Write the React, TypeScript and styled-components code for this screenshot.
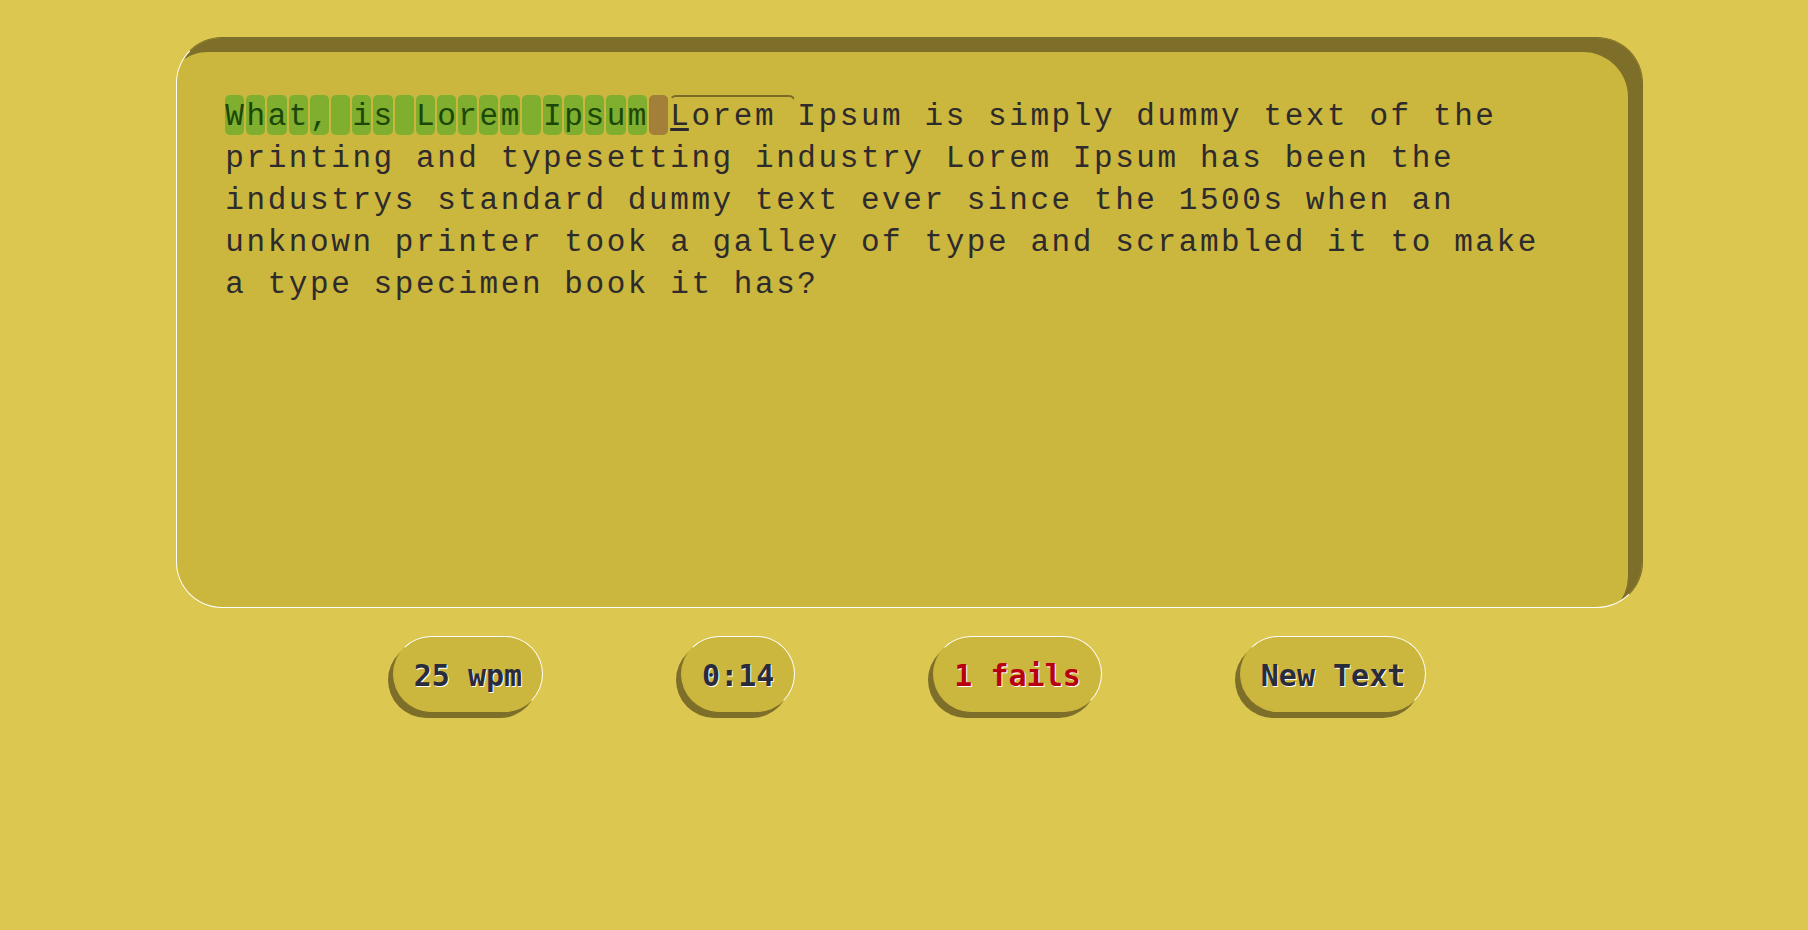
import React from "react";
import styled, { createGlobalStyle, css } from "styled-components";

const GlobalStyle = createGlobalStyle`
  html, body {
    margin: 0;
    padding: 0;
    background: #dcc751;
  }
  body {
    font-family: "Liberation Mono", "DejaVu Sans Mono", monospace;
  }
`;

const DARK = "#7d6f29";
const PANEL = "#cbb63e";

const Page = styled.main`
  display: flex;
  flex-direction: column;
  padding: 37px 0 0 176px;
  min-height: 930px;
  box-sizing: border-box;
`;

const Panel = styled.section`
  box-sizing: border-box;
  width: 1467px;
  height: 571px;
  background: ${PANEL};
  border: 1px solid;
  border-color: ${DARK} ${DARK} #ffffff #ffffff;
  border-radius: 46px;
  box-shadow: inset -14px 14px 0 ${DARK};
  padding: 57px 67px 0 48px;
`;

const TextFlow = styled.div`
  display: flex;
  flex-wrap: wrap;
  row-gap: 2px;
  font-family: "Liberation Mono", "DejaVu Sans Mono", monospace;
  font-size: 31px;
  color: #2e2b2c;
`;

const Word = styled.span<{ $current?: boolean }>`
  position: relative;
  display: inline-flex;
  white-space: pre;
  ${(p) =>
    p.$current &&
    css`
      &::before {
        content: "";
        position: absolute;
        left: -1px;
        right: 1px;
        top: 0;
        height: 8px;
        box-sizing: border-box;
        border: 2px solid transparent;
        border-top-color: #7a6a2a;
        border-radius: 7px 7px 0 0;
        pointer-events: none;
      }
    `}
`;

type CharState = "typed" | "cursor" | "pending";

const Char = styled.span<{ $state: CharState; $underline?: boolean }>`
  display: inline-block;
  width: 19.2px;
  height: 40px;
  line-height: 44px;
  margin-right: 2px;
  text-align: center;
  border-radius: 5px;
  white-space: pre;
  ${(p) =>
    p.$state === "typed" &&
    css`
      background: #80ae2e;
      color: #1b4808;
    `}
  ${(p) =>
    p.$state === "cursor" &&
    css`
      background: #a47f3a;
    `}
  ${(p) =>
    p.$underline &&
    css`
      text-decoration: underline;
      text-decoration-thickness: 3px;
      text-underline-offset: 3px;
      text-decoration-color: #2b2a33;
    `}
`;

const StatsRow = styled.div`
  display: flex;
  align-items: center;
  justify-content: center;
  gap: 138px;
  width: 1467px;
  margin-top: 28px;
`;

const StatButton = styled.button<{ $danger?: boolean }>`
  box-sizing: border-box;
  height: 76px;
  padding: 3px 20px 0;
  border: 1px solid;
  border-color: #ffffff #ffffff ${PANEL} ${PANEL};
  border-radius: 38px;
  background: ${PANEL};
  box-shadow: -5px 6px 0 ${DARK};
  font-family: "DejaVu Sans Mono", "Liberation Mono", monospace;
  font-weight: bold;
  font-size: 30px;
  line-height: 36px;
  white-space: pre;
  color: ${(p) => (p.$danger ? "#b8000e" : "#2b2c3a")};
  text-shadow: 1px 1px 0 #ffffff;
  cursor: pointer;
`;

const TEXT =
  "What, is Lorem Ipsum Lorem Ipsum is simply dummy text of the printing and typesetting industry Lorem Ipsum has been the industrys standard dummy text ever since the 1500s when an unknown printer took a galley of type and scrambled it to make a type specimen book it has?";

const CURSOR = 20;
const CURRENT_WORD = 4;

export default function App() {
  const words = TEXT.split(" ");
  let index = 0;

  return (
    <>
      <GlobalStyle />
      <Page>
        <Panel>
          <TextFlow>
            {words.map((w, wi) => {
              const chars = wi < words.length - 1 ? w + " " : w;
              const startIndex = index;
              index += chars.length;
              return (
                <Word key={wi} $current={wi === CURRENT_WORD}>
                  {chars.split("").map((c, ci) => {
                    const gi = startIndex + ci;
                    const state: CharState =
                      gi < CURSOR ? "typed" : gi === CURSOR ? "cursor" : "pending";
                    return (
                      <Char key={ci} $state={state} $underline={gi === CURSOR + 1}>
                        {c}
                      </Char>
                    );
                  })}
                </Word>
              );
            })}
          </TextFlow>
        </Panel>
        <StatsRow>
          <StatButton>25 wpm</StatButton>
          <StatButton>0:14</StatButton>
          <StatButton $danger>1 fails</StatButton>
          <StatButton>New Text</StatButton>
        </StatsRow>
      </Page>
    </>
  );
}
